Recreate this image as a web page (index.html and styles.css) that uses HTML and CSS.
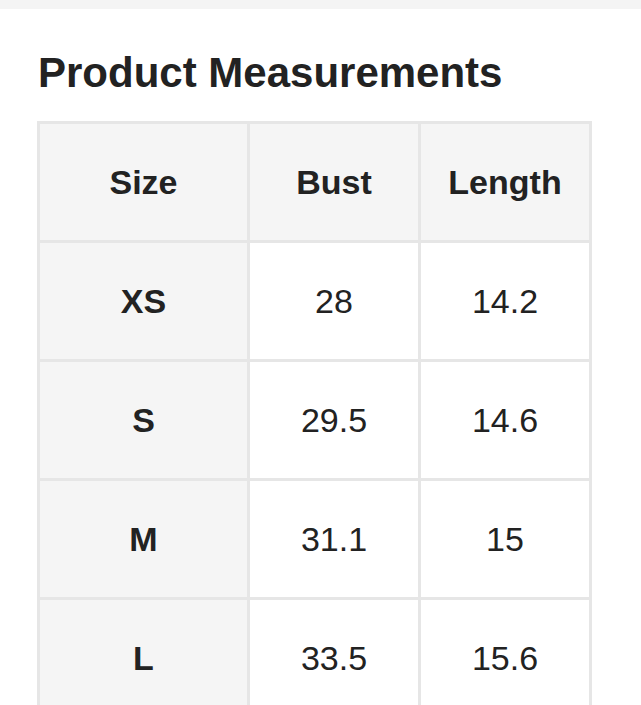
FILE: index.html
```html
<!DOCTYPE html>
<html>
<head>
<meta charset="utf-8">
<link rel="stylesheet" href="styles.css">
</head>
<body>
<div class="topbar"></div>
<section class="measure">
  <h2 class="title">Product Measurements</h2>
  <table class="size-table">
    <colgroup>
      <col class="c1"><col class="c2"><col class="c3">
    </colgroup>
    <thead>
      <tr><th>Size</th><th>Bust</th><th>Length</th></tr>
    </thead>
    <tbody>
      <tr><th>XS</th><td>28</td><td>14.2</td></tr>
      <tr><th>S</th><td>29.5</td><td>14.6</td></tr>
      <tr><th>M</th><td>31.1</td><td>15</td></tr>
      <tr><th>L</th><td>33.5</td><td>15.6</td></tr>
    </tbody>
  </table>
</section>
</body>
</html>
```
FILE: styles.css
```css
html, body {
  margin: 0;
  padding: 0;
  background: #fff;
  font-family: "Liberation Sans", Arial, sans-serif;
  color: #222;
}
.topbar {
  height: 9px;
  background: #f4f4f4;
}
.measure {
  padding: 40px 0 0 38px;
}
.title {
  margin: 0 0 24px 0;
  font-size: 42px;
  font-weight: bold;
  line-height: 48px;
  color: #222;
}
.size-table {
  margin-left: -1px;
  border-collapse: collapse;
  table-layout: fixed;
  width: 555px;
}
.c1 { width: 210px; }
.c2 { width: 171px; }
.c3 { width: 171px; }
.size-table th,
.size-table td {
  border: 3px solid #e6e6e6;
  height: 119px;
  padding: 0;
  text-align: center;
  vertical-align: middle;
  font-size: 34px;
  box-sizing: border-box;
}
.size-table th {
  font-weight: bold;
  background: #f5f5f5;
}
.size-table td {
  font-weight: normal;
  background: #fff;
}
```
